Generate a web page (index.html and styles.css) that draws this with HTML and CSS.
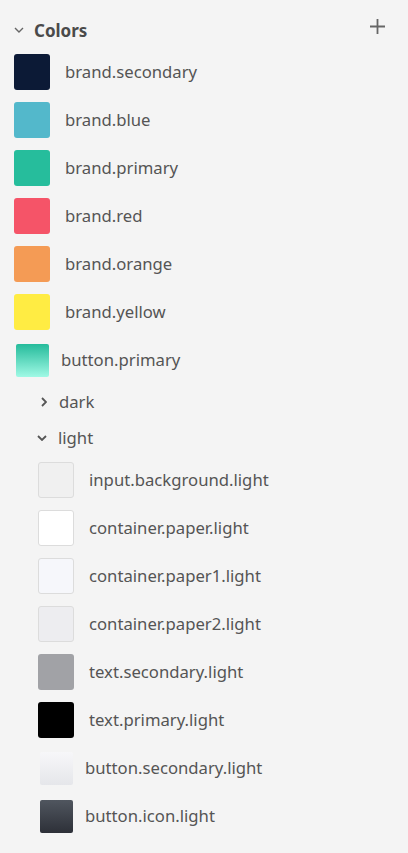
FILE: index.html
```html
<!DOCTYPE html>
<html>
<head>
<meta charset="utf-8">
<link rel="stylesheet" href="styles.css">
</head>
<body>
<div class="panel">
  <div class="header">
    <svg class="chev-head" width="10" height="6" viewBox="0 0 10 6"><path d="M1 1 L5 5 L9 1" fill="none" stroke="#666" stroke-width="1.4"/></svg>
    <span class="title">Colors</span>
    <svg class="plus" width="15" height="15" viewBox="0 0 15 15"><path d="M7.5 0 V15 M0 7.5 H15" stroke="#666" stroke-width="1.8"/></svg>
  </div>
  <div class="list">
    <div class="row"><span class="sw" style="background:#0c1a36"></span><span class="name">brand.secondary</span></div>
    <div class="row"><span class="sw" style="background:#53b8cb"></span><span class="name">brand.blue</span></div>
    <div class="row"><span class="sw" style="background:#26bd9c"></span><span class="name">brand.primary</span></div>
    <div class="row"><span class="sw" style="background:#f55468"></span><span class="name">brand.red</span></div>
    <div class="row"><span class="sw" style="background:#f49b55"></span><span class="name">brand.orange</span></div>
    <div class="row"><span class="sw" style="background:#ffec43"></span><span class="name">brand.yellow</span></div>
    <div class="row"><span class="sw grad" style="background:linear-gradient(#25bb9b,#a0f9e5)"></span><span class="name">button.primary</span></div>
    <div class="group-head">
      <svg class="chev-right" width="6" height="10" viewBox="0 0 6 10"><path d="M1 1 L5 5 L1 9" fill="none" stroke="#555" stroke-width="1.8"/></svg>
      <span class="name">dark</span>
    </div>
    <div class="group-head">
      <svg class="chev-down" width="10" height="6" viewBox="0 0 10 6"><path d="M1 1 L5 5 L9 1" fill="none" stroke="#555" stroke-width="1.8"/></svg>
      <span class="name">light</span>
    </div>
    <div class="nested">
      <div class="row"><span class="sw bordered" style="background:#f0f0f0"></span><span class="name">input.background.light</span></div>
      <div class="row"><span class="sw bordered" style="background:#ffffff"></span><span class="name">container.paper.light</span></div>
      <div class="row"><span class="sw bordered" style="background:#f6f7fb"></span><span class="name">container.paper1.light</span></div>
      <div class="row"><span class="sw bordered" style="background:#ededf0"></span><span class="name">container.paper2.light</span></div>
      <div class="row"><span class="sw" style="background:#a1a2a6"></span><span class="name">text.secondary.light</span></div>
      <div class="row"><span class="sw" style="background:#000000"></span><span class="name">text.primary.light</span></div>
      <div class="row"><span class="sw grad" style="background:linear-gradient(#f7f7f9,#e5e6ea)"></span><span class="name">button.secondary.light</span></div>
      <div class="row"><span class="sw grad" style="background:linear-gradient(#50565f,#2d3038)"></span><span class="name">button.icon.light</span></div>
    </div>
  </div>
</div>
</body>
</html>
```
FILE: styles.css
```css
html, body {
  margin: 0;
  padding: 0;
  background: #f4f4f4;
}
body {
  font-family: "Noto Sans", "Open Sans", sans-serif;
  color: #555555;
  width: 408px;
  height: 853px;
  overflow: hidden;
}
.panel {
  display: flex;
  flex-direction: column;
}
.header {
  height: 36px;
  padding-top: 12px;
  display: flex;
  align-items: center;
  padding-left: 14px;
  padding-right: 23px;
}
.chev-head {
  margin-top: -1px;
}
.title {
  margin-left: 10px;
  font-weight: 700;
  font-size: 17px;
  color: #4a4a4a;
  flex: 1;
}
.plus {
  margin-top: -7px;
}
.list {
  display: flex;
  flex-direction: column;
  padding-left: 14px;
}
.row {
  height: 48px;
  display: flex;
  align-items: center;
}
.sw {
  width: 36px;
  height: 36px;
  border-radius: 3px;
  box-sizing: border-box;
  flex: none;
}
.sw.bordered {
  border: 1px solid #dcdcdc;
}
.sw.grad {
  width: 33px;
  height: 33px;
  border-radius: 2px;
  margin-left: 2px;
  margin-right: -3px;
}
.name {
  margin-left: 15px;
  margin-bottom: 2px;
  font-size: 16.7px;
  color: #555555;
}
.group-head {
  height: 36px;
  display: flex;
  align-items: center;
  padding-left: 23px;
}
.group-head .name {
  margin-left: 0;
}
.chev-right {
  margin-left: 4px;
  margin-right: 12px;
}
.chev-down {
  margin-right: 11px;
}
.nested {
  display: flex;
  flex-direction: column;
  padding-left: 24px;
}
```
